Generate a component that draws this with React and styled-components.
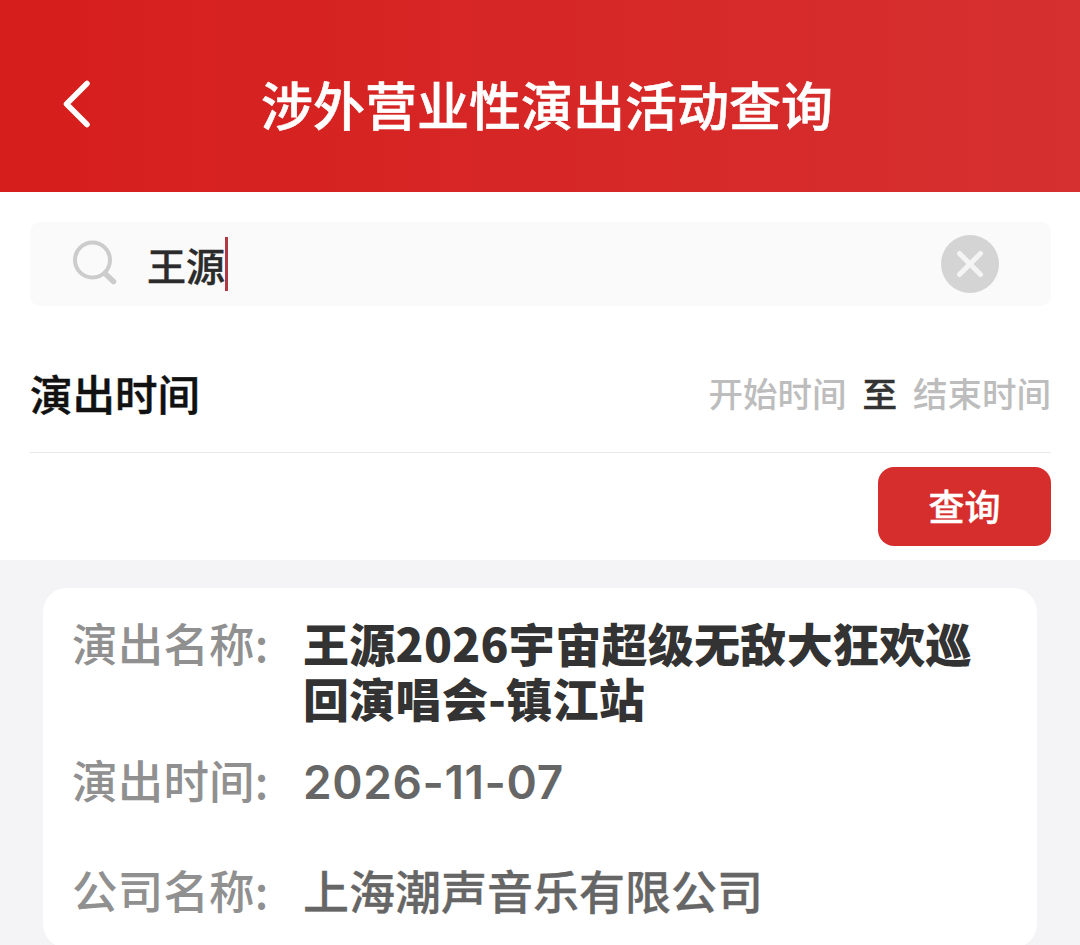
import styled, { createGlobalStyle } from "styled-components";

const Global = createGlobalStyle`
  html, body { margin: 0; padding: 0; background: #fff; }
  body { font-family: "Noto Sans CJK SC", "Noto Sans", sans-serif; }
`;

function BackIcon() {
  return (
    <svg width="30" height="50" viewBox="0 0 30 50" fill="none">
      <path d="M25 4.5 L4.5 25 L25 45.5" stroke="#fff" strokeWidth="5.5" strokeLinecap="round" strokeLinejoin="round" />
    </svg>
  );
}

function SearchIcon() {
  return (
    <svg width="48" height="48" viewBox="0 0 48 48" fill="none">
      <circle cx="21.5" cy="20" r="17.5" stroke="#cccccc" strokeWidth="4" />
      <path d="M34 33.5 L42.5 41.5" stroke="#cccccc" strokeWidth="5.5" strokeLinecap="round" />
    </svg>
  );
}

function ClearIcon() {
  return (
    <svg width="58" height="58" viewBox="0 0 58 58">
      <circle cx="29" cy="29" r="29" fill="#d4d4d4" />
      <path d="M18.5 18.5 L39.5 39.5 M39.5 18.5 L18.5 39.5" stroke="#f4f4f4" strokeWidth="5" strokeLinecap="round" />
    </svg>
  );
}

export default function App() {
  return (
    <Page>
      <Global />
      <Header>
        <BackIcon />
        <Title>涉外营业性演出活动查询</Title>
      </Header>
      <Filters>
        <SearchBar>
          <SearchIcon />
          <SearchText>王源<Caret /></SearchText>
          <ClearIcon />
        </SearchBar>
        <TimeRow>
          <TimeLabel>演出时间</TimeLabel>
          <TimeRange>
            <Placeholder>开始时间</Placeholder>
            <To>至</To>
            <Placeholder>结束时间</Placeholder>
          </TimeRange>
        </TimeRow>
        <Actions>
          <QueryBtn>查询</QueryBtn>
        </Actions>
      </Filters>
      <List>
        <Card>
          <Row>
            <Label>演出名称:</Label>
            <Name>王源2026宇宙超级无敌大狂欢巡回演唱会-镇江站</Name>
          </Row>
          <Row $top={27}>
            <Label>演出时间:</Label>
            <DateValue>2026-11-07</DateValue>
          </Row>
          <Row $top={52}>
            <Label>公司名称:</Label>
            <Value>上海潮声音乐有限公司</Value>
          </Row>
        </Card>
      </List>
    </Page>
  );
}

const Page = styled.div`
  width: 1080px;
  height: 945px;
  overflow: hidden;
  background: #f4f4f6;
`;

const Header = styled.header`
  height: 192px;
  padding: 16px 247px 0 62px;
  box-sizing: border-box;
  display: flex;
  align-items: center;
  background: linear-gradient(90deg, #d61e1c, #d63030);
  color: #fff;
`;

const Title = styled.h1`
  margin: 0 0 0 auto;
  font-size: 52px;
  line-height: 60px;
  font-weight: 500;
  -webkit-text-stroke: 0.6px #fff;
  white-space: nowrap;
`;

const Filters = styled.section`
  background: #fff;
  padding: 30px 29px 14px 30px;
  height: 368px;
  box-sizing: border-box;
`;

const SearchBar = styled.div`
  height: 84px;
  padding: 0 52px 0 41px;
  display: flex;
  align-items: center;
  background: #fafafa;
  border-radius: 10px;
`;

const SearchText = styled.div`
  flex: 1;
  display: flex;
  align-items: center;
  margin-left: 28px;
  font-size: 39px;
  font-weight: 500;
  -webkit-text-stroke: 0.4px #2b2b2b;
  color: #2b2b2b;
`;

const Caret = styled.span`
  width: 3px;
  height: 54px;
  background: #b03a44;
`;

const TimeRow = styled.div`
  height: 147px;
  padding-top: 26px;
  box-sizing: border-box;
  display: flex;
  align-items: center;
  justify-content: space-between;
  border-bottom: 1px solid #e8e8e8;
`;

const TimeLabel = styled.div`
  font-size: 42.5px;
  font-weight: 500;
  -webkit-text-stroke: 0.5px #111;
  color: #111;
`;

const TimeRange = styled.div`
  display: flex;
  align-items: center;
  gap: 16px;
  font-size: 34.5px;
  font-weight: 500;
`;

const Placeholder = styled.span`
  color: #bdbdbd;
`;

const To = styled.span`
  color: #333;
  -webkit-text-stroke: 0.5px #333;
`;

const Actions = styled.div`
  display: flex;
  justify-content: flex-end;
  margin-top: 14px;
`;

const QueryBtn = styled.button`
  width: 173px;
  height: 79px;
  padding: 0 0 4px;
  border: none;
  border-radius: 16px;
  background: #d62d2d;
  color: #fff;
  font-family: inherit;
  font-size: 36px;
  font-weight: 500;
  -webkit-text-stroke: 0.4px #fff;
`;

const List = styled.section`
  padding: 28px 43px 0;
`;

const Card = styled.article`
  height: 360px;
  padding: 27px 60px 0 29px;
  box-sizing: border-box;
  background: #fff;
  border-radius: 24px;
`;

const Row = styled.div`
  display: flex;
  margin-top: ${({ $top }) => $top || 0}px;
  font-size: 46px;
  line-height: 55px;
`;

const Label = styled.div`
  flex: none;
  width: 231px;
  font-size: 45.5px;
  letter-spacing: 0.2px;
  color: #909090;
  font-weight: 500;
`;

const Name = styled.div`
  font-weight: 900;
  letter-spacing: 0.3px;
  color: #333;
`;

const Value = styled.div`
  font-weight: 500;
  color: #666;
  -webkit-text-stroke: 0.3px #666;
`;

const DateValue = styled(Value)`
  padding-top: 3px;
  font-family: "Inter", sans-serif;
  font-weight: 600;
  letter-spacing: 0.6px;
  -webkit-text-stroke: 0;
`;
